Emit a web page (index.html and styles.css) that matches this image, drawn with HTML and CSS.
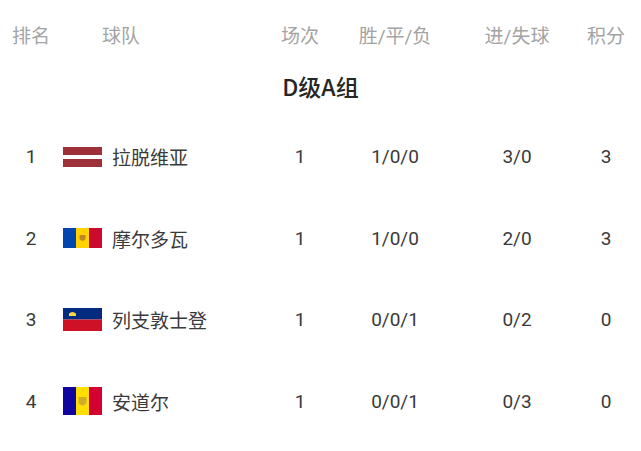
FILE: index.html
```html
<!DOCTYPE html>
<html lang="zh">
<head>
<meta charset="utf-8">
<link rel="stylesheet" href="styles.css">
</head>
<body>
<div class="table">
  <div class="head">
    <div class="c rank">排名</div>
    <div class="c team head-team">球队</div>
    <div class="c">场次</div>
    <div class="c">胜/平/负</div>
    <div class="c">进/失球</div>
    <div class="c">积分</div>
  </div>
  <div class="title">D级A组</div>
  <div class="row">
    <div class="c rank">1</div>
    <div class="c team">
      <svg class="flag" width="39" height="20" viewBox="0 0 39 20"><rect width="39" height="20" fill="#9e3039"/><rect y="8" width="39" height="4" fill="#fff"/></svg>
      <span>拉脱维亚</span>
    </div>
    <div class="c">1</div>
    <div class="c">1/0/0</div>
    <div class="c">3/0</div>
    <div class="c">3</div>
  </div>
  <div class="row">
    <div class="c rank">2</div>
    <div class="c team">
      <svg class="flag" width="39" height="20" viewBox="0 0 39 20"><rect width="13" height="20" fill="#0046ae"/><rect x="13" width="13" height="20" fill="#ffd200"/><rect x="26" width="13" height="20" fill="#cc092f"/><path d="M16.5 7 h6 v4 q-3 4 -6 0 z" fill="#b07a2a" opacity="0.85"/></svg>
      <span>摩尔多瓦</span>
    </div>
    <div class="c">1</div>
    <div class="c">1/0/0</div>
    <div class="c">2/0</div>
    <div class="c">3</div>
  </div>
  <div class="row">
    <div class="c rank">3</div>
    <div class="c team">
      <svg class="flag" width="39" height="23" viewBox="0 0 39 23"><rect width="39" height="11.5" fill="#002b7f"/><rect y="11.5" width="39" height="11.5" fill="#ce1126"/><path d="M6 8 h7 v-2.5 q-3.5 -3 -7 0 z" fill="#ffd83d"/></svg>
      <span>列支敦士登</span>
    </div>
    <div class="c">1</div>
    <div class="c">0/0/1</div>
    <div class="c">0/2</div>
    <div class="c">0</div>
  </div>
  <div class="row">
    <div class="c rank">4</div>
    <div class="c team">
      <svg class="flag" width="39" height="28" viewBox="0 0 39 28"><rect width="13" height="28" fill="#10069f"/><rect x="13" width="13" height="28" fill="#fedf00"/><rect x="26" width="13" height="28" fill="#d50032"/><path d="M15.5 10 h8 v6 q-4 5 -8 0 z" fill="#c7a034" opacity="0.8"/></svg>
      <span>安道尔</span>
    </div>
    <div class="c">1</div>
    <div class="c">0/0/1</div>
    <div class="c">0/3</div>
    <div class="c">0</div>
  </div>
</div>
</body>
</html>
```

FILE: styles.css
```css
html, body {
  margin: 0;
  padding: 0;
  background: #ffffff;
}
body {
  font-family: Roboto, "Noto Sans CJK SC", sans-serif;
  color: #333333;
  width: 641px;
  height: 451px;
  overflow: hidden;
}
.table {
  display: flex;
  flex-direction: column;
}
.head, .row {
  display: grid;
  grid-template-columns: 62px 198px 80px 110px 134px 44px;
  align-items: center;
}
.head {
  height: 68px;
  font-size: 19px;
  color: #a3a3a3;
}
.c {
  text-align: center;
  white-space: nowrap;
}
.team {
  text-align: left;
  display: flex;
  align-items: center;
  gap: 10px;
  padding-left: 1px;
}
.head-team {
  padding-left: 40px;
}
.title {
  height: 36px;
  line-height: 36px;
  text-align: center;
  font-family: "Noto Sans CJK SC", sans-serif;
  font-size: 23px;
  font-weight: 500;
  color: #262626;
  margin-bottom: 12px;
}
.row {
  height: 81.5px;
  font-size: 19px;
  color: #3a3a3a;
}
.flag {
  display: block;
  flex: none;
}
```
